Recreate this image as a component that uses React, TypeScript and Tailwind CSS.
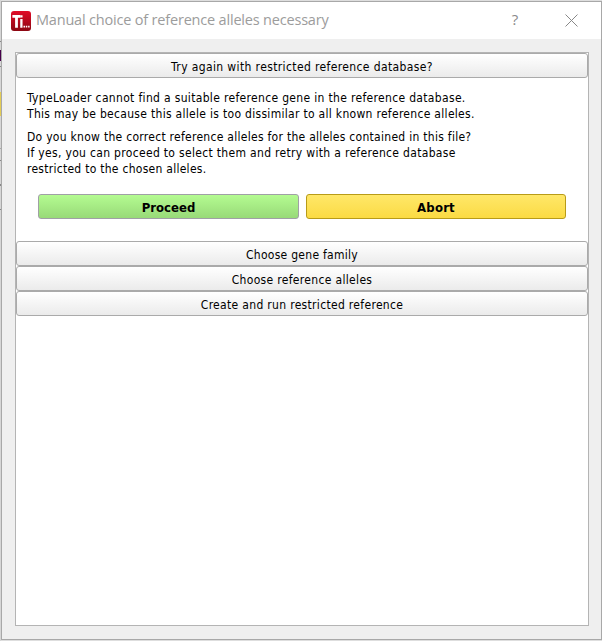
import React from "react";

const body = "font-['DejaVu_Sans_Condensed','DejaVu_Sans',sans-serif] [font-stretch:condensed]";

function Line({ children, className = "" }: { children: React.ReactNode; className?: string }) {
  return (
    <div className="h-4">
      <span className={`whitespace-nowrap ${className}`}>{children}</span>
    </div>
  );
}

function SectionButton({ children, className = "" }: { children: React.ReactNode; className?: string }) {
  return (
    <button className="flex h-[25px] w-full shrink-0 items-center justify-center rounded-[3px] border border-[#aaaaaa] bg-linear-to-b from-white to-[#ebebeb] pt-[3px]">
      <span className={`whitespace-nowrap ${className}`}>{children}</span>
    </button>
  );
}

function AppIcon() {
  return (
    <svg width="20" height="20" viewBox="0 0 20 20" className="shrink-0">
      <defs>
        <linearGradient id="red" x1="0" y1="0" x2="0" y2="1">
          <stop offset="0" stopColor="#e10b27" />
          <stop offset="1" stopColor="#8b0712" />
        </linearGradient>
      </defs>
      <rect width="20" height="20" rx="3" fill="url(#red)" />
      <path d="M1.4 5.4H9.4M5.5 5V16.7" stroke="#fff" strokeWidth="2.8" fill="none" />
      <path d="M10.4 8V16.7M10.4 4.2V6.5" stroke="#fff" strokeWidth="2.3" />
      <path d="M12.5 15.7h1.5M14.8 15.7h1.5M17.1 15.7h1.5" stroke="#fff" strokeWidth="1.8" />
    </svg>
  );
}

export default function App() {
  return (
    <div className="flex h-[641px] w-[602px] overflow-hidden bg-[#dedede]">
      <div className="flex w-px shrink-0 flex-col bg-[#d6d6d6]">
        <i className="mt-[41px] h-px bg-[#888]" />
        <i className="mt-2 h-[11px] bg-[#46004b]" />
        <i className="mt-[5px] h-px bg-[#888]" />
        <i className="mt-[25px] h-[24px] bg-[#e3cc55]" />
        <i className="mt-[32px] h-px bg-[#aaa]" />
        <i className="mt-[11px] h-px bg-[#888]" />
        <i className="mt-[23px] h-[2px] bg-[#888]" />
        <i className="mt-[23px] h-px bg-[#888]" />
      </div>
      <div className="mt-px flex h-[639px] w-[601px] flex-col border border-[#a8a8a8] bg-[#efefef]">
        <header className="flex h-[37px] shrink-0 items-center bg-white pl-[9px]">
          <AppIcon />
          <h1 className="ml-[5px] w-[460px] whitespace-nowrap pb-[2px] font-['Open_Sans',sans-serif] text-[14.5px] leading-5 text-[#9c9c9c]">
            <span className="tracking-[-0.19px]">Manual choice of reference alleles necessary</span>
          </h1>
          <span className="ml-[13px] w-3 pb-[2px] text-center font-['Open_Sans',sans-serif] text-[15px] text-[#8a8a8a]">?</span>
          <svg width="13" height="13" viewBox="0 0 13 13" className="ml-[44px]" stroke="#888" fill="none">
            <path d="M.5.5l12 12M12.5.5l-12 12" />
          </svg>
        </header>
        <main className={`ml-[13px] mt-[13px] flex h-[574px] w-[574px] flex-col border border-[#b4b4b4] bg-white text-[12px] leading-4 text-black ${body}`}>
          <SectionButton className="tracking-[0.38px]">Try again with restricted reference database?</SectionButton>
          <div className="h-[163px] shrink-0 pl-[11px] pt-[12px]">
            <Line className="tracking-[0.33px]">TypeLoader cannot find a suitable reference gene in the reference database.</Line>
            <Line className="tracking-[0.3px]">This may be because this allele is too dissimilar to all known reference alleles.</Line>
            <div className="h-[7px]" />
            <Line className="tracking-[0.28px]">Do you know the correct reference alleles for the alleles contained in this file?</Line>
            <Line className="tracking-[0.32px]">If yes, you can proceed to select them and retry with a reference database</Line>
            <Line className="tracking-[0.27px]">restricted to the chosen alleles.</Line>
            <div className="ml-[11px] mt-[17px] flex gap-[7px] text-[13px] font-bold">
              <button className="flex h-[25px] w-[261px] items-center justify-center rounded-[3px] border border-[#a0a0a5] bg-linear-to-b from-[#b4fb91] to-[#98da78] pt-[3px]">
                <span>Proceed</span>
              </button>
              <button className="flex h-[25px] w-[260px] items-center justify-center rounded-[3px] border border-[#b89b18] bg-linear-to-b from-[#ffe768] to-[#fbdb42] pt-[3px]">
                <span className="tracking-[0.2px]">Abort</span>
              </button>
            </div>
          </div>
          <SectionButton className="tracking-[0.28px]">Choose gene family</SectionButton>
          <SectionButton className="tracking-[0.33px]">Choose reference alleles</SectionButton>
          <SectionButton className="tracking-[0.32px]">Create and run restricted reference</SectionButton>
        </main>
      </div>
    </div>
  );
}
